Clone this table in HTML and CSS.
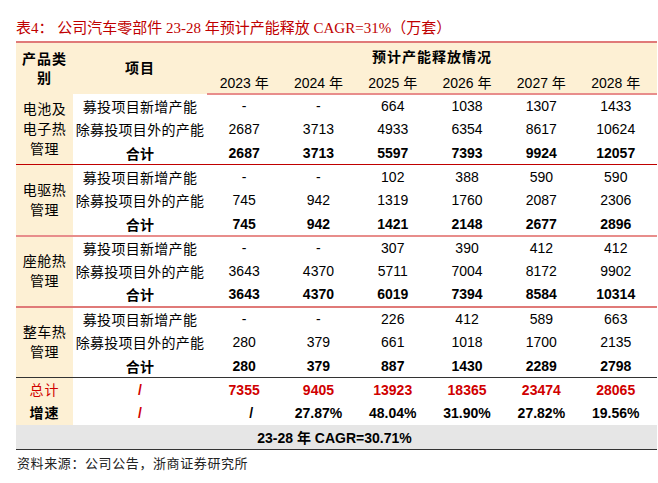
FILE: index.html
```html
<!DOCTYPE html>
<html lang="zh">
<head>
<meta charset="utf-8">
<link rel="stylesheet" href="styles.css">
</head>
<body>
<div class="page">
  <h1 class="title">表4： 公司汽车零部件 23-28 年预计产能释放 CAGR=31%（万套）</h1>
  <table class="cap">
    <colgroup>
      <col class="c-cat"><col class="c-item">
      <col class="c-year"><col class="c-year"><col class="c-year"><col class="c-year"><col class="c-year"><col class="c-last">
    </colgroup>
    <thead>
      <tr class="h1">
        <th rowspan="2" class="cat">产品类<br>别</th>
        <th rowspan="2" class="hitem">项目</th>
        <th colspan="6" class="hgroup">预计产能释放情况</th>
      </tr>
      <tr class="h2">
        <th class="yr">2023 年</th><th class="yr">2024 年</th><th class="yr">2025 年</th><th class="yr">2026 年</th><th class="yr">2027 年</th><th class="yr">2028 年</th>
      </tr>
    </thead>
    <tbody class="grp g1">
      <tr><td rowspan="3" class="cat">电池及<br>电子热<br>管理</td><td class="item">募投项目新增产能</td><td>-</td><td>-</td><td>664</td><td>1038</td><td>1307</td><td>1433</td></tr>
      <tr><td class="item">除募投项目外的产能</td><td>2687</td><td>3713</td><td>4933</td><td>6354</td><td>8617</td><td>10624</td></tr>
      <tr class="sum"><td class="item">合计</td><td>2687</td><td>3713</td><td>5597</td><td>7393</td><td>9924</td><td>12057</td></tr>
    </tbody>
    <tbody class="grp g2">
      <tr><td rowspan="3" class="cat">电驱热<br>管理</td><td class="item">募投项目新增产能</td><td>-</td><td>-</td><td>102</td><td>388</td><td>590</td><td>590</td></tr>
      <tr><td class="item">除募投项目外的产能</td><td>745</td><td>942</td><td>1319</td><td>1760</td><td>2087</td><td>2306</td></tr>
      <tr class="sum"><td class="item">合计</td><td>745</td><td>942</td><td>1421</td><td>2148</td><td>2677</td><td>2896</td></tr>
    </tbody>
    <tbody class="grp g3">
      <tr><td rowspan="3" class="cat">座舱热<br>管理</td><td class="item">募投项目新增产能</td><td>-</td><td>-</td><td>307</td><td>390</td><td>412</td><td>412</td></tr>
      <tr><td class="item">除募投项目外的产能</td><td>3643</td><td>4370</td><td>5711</td><td>7004</td><td>8172</td><td>9902</td></tr>
      <tr class="sum"><td class="item">合计</td><td>3643</td><td>4370</td><td>6019</td><td>7394</td><td>8584</td><td>10314</td></tr>
    </tbody>
    <tbody class="grp g4">
      <tr><td rowspan="3" class="cat">整车热<br>管理</td><td class="item">募投项目新增产能</td><td>-</td><td>-</td><td>226</td><td>412</td><td>589</td><td>663</td></tr>
      <tr><td class="item">除募投项目外的产能</td><td>280</td><td>379</td><td>661</td><td>1018</td><td>1700</td><td>2135</td></tr>
      <tr class="sum"><td class="item">合计</td><td>280</td><td>379</td><td>887</td><td>1430</td><td>2289</td><td>2798</td></tr>
    </tbody>
    <tbody class="tot">
      <tr class="total"><td class="cat">总计</td><td>/</td><td>7355</td><td>9405</td><td>13923</td><td>18365</td><td>23474</td><td>28065</td></tr>
      <tr class="growth"><td class="cat">增速</td><td class="red">/</td><td class="slash">/</td><td>27.87%</td><td>48.04%</td><td>31.90%</td><td>27.82%</td><td>19.56%</td></tr>
      <tr class="cagr"><td colspan="8">23-28 年 CAGR=30.71%</td></tr>
    </tbody>
  </table>
  <p class="source">资料来源：公司公告，浙商证券研究所</p>
</div>
</body>
</html>
```

FILE: styles.css
```css
html, body {
  margin: 0;
  padding: 0;
  background: #ffffff;
}

.page {
  padding: 16px 1px 0 16px;
  font-family: "Liberation Sans", "Noto Sans CJK SC", sans-serif;
  color: #000;
}

.title {
  margin: 0;
  font-family: "Liberation Serif", "Noto Sans CJK SC", serif;
  font-weight: normal;
  font-size: 15px;
  line-height: 24px;
  height: 25px;
  color: #c00000;
  white-space: nowrap;
}

.cap {
  width: 641px;
  border-collapse: collapse;
  table-layout: fixed;
  font-size: 14px;
  border-top: 2px solid #e07a78;
}

.c-cat { width: 57px; }
.c-item { width: 134px; }
.c-year { width: 74.3px; }
.c-last { width: 78.5px; }

.cap th, .cap td {
  padding: 0;
  text-align: center;
  vertical-align: middle;
  white-space: nowrap;
}

.cap td:last-child, .cap th.yr:last-child {
  padding-right: 4px;
}

thead th {
  background: #fdf0d4;
  font-weight: normal;
}

.h1 { height: 29px; }
.h2 { height: 23px; }

thead .cat, .hitem, .hgroup {
  font-weight: bold;
  letter-spacing: 1px;
  line-height: 19px;
}

.hgroup { padding-top: 2px; }

.yr { font-size: 14px; }

thead tr.h2 th { border-bottom: 2px solid #e88d8b; }

.cat {
  background: #fdf0d4;
  line-height: 20px;
  letter-spacing: 0.5px;
}

.grp tr { height: 23.65px; }

.item {
  letter-spacing: 0.3px;
}

.sum td { font-weight: bold; }

.g1 tr:last-child td, .g1 td.cat { border-bottom: 1px solid #c00000; }
.g2 tr:last-child td, .g2 td.cat { border-bottom: 2px solid #e88d8b; }
.g3 tr:last-child td, .g3 td.cat { border-bottom: 2px solid #e07a78; }
.g4 tr:last-child td, .g4 td.cat { border-bottom: 1px solid #333333; }

.tot tr { height: 23.5px; }

.total td {
  color: #d00000;
  font-weight: bold;
}

.total td.cat {
  font-weight: normal;
  letter-spacing: 1px;
}

.growth td { font-weight: bold; }
.growth td.red { color: #d00000; }
.growth td.cat { letter-spacing: 1px; }
.growth td.slash { padding-left: 14px; }

.cagr td {
  background: #e6e6e6;
  font-weight: bold;
  height: 24px;
  border-bottom: 1px solid #333333;
}

.source {
  margin: 6px 0 0 1px;
  font-size: 13px;
  line-height: 16px;
  letter-spacing: 0.6px;
  color: #222;
}
```
